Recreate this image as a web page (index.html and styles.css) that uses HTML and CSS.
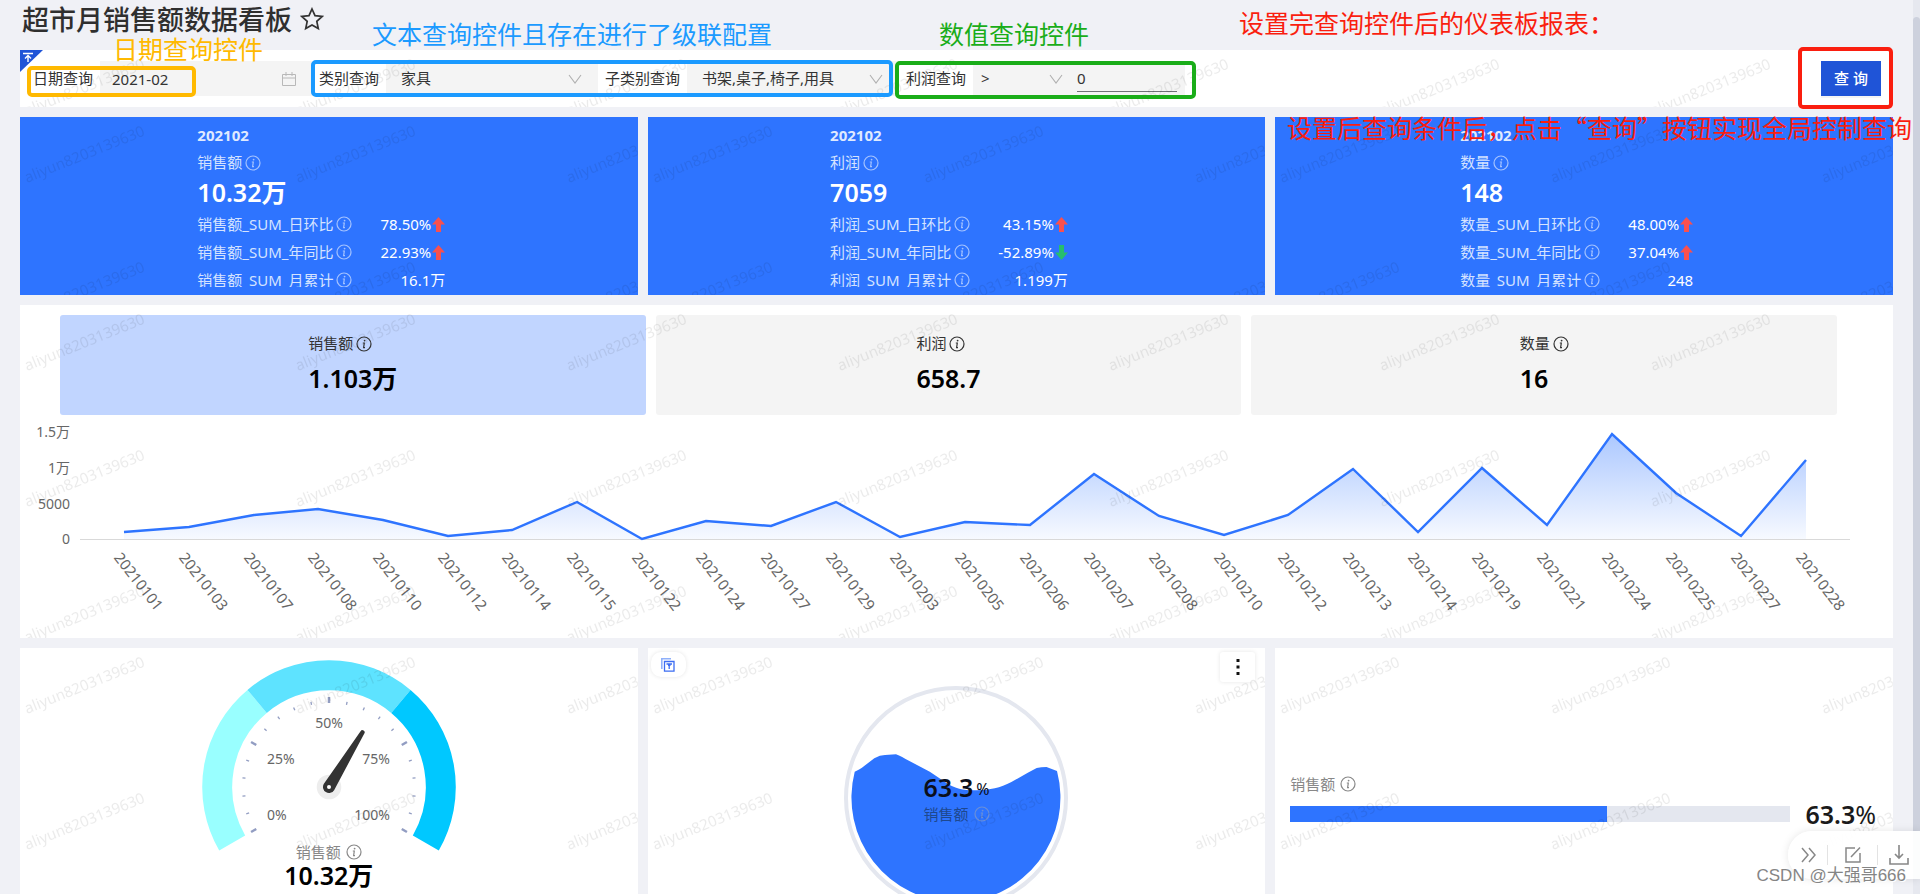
FILE: index.html
```html
<!DOCTYPE html>
<html lang="zh-CN">
<head>
<meta charset="utf-8">
<title>超市月销售额数据看板</title>
<link rel="stylesheet" href="styles.css">
</head>
<body>
<svg class="defs" aria-hidden="true">
  <defs>
    <pattern id="wm" width="271" height="136" patternUnits="userSpaceOnUse">
      <text class="wm-text" transform="translate(7 66) rotate(-22)">aliyun8203139630</text>
    </pattern>
    <linearGradient id="area" x1="0" y1="0" x2="0" y2="1">
      <stop offset="0" stop-color="#2e74ff" stop-opacity="0.4"/>
      <stop offset="1" stop-color="#2e74ff" stop-opacity="0.04"/>
    </linearGradient>
    <symbol id="info" viewBox="0 0 16 16">
      <circle cx="8" cy="8" r="7" fill="none" stroke="currentColor" stroke-width="1.2"/>
      <circle cx="8.6" cy="4.6" r="0.9" fill="currentColor"/>
      <path d="M6.8 7h1.5l-.7 4.6h1.4" fill="none" stroke="currentColor" stroke-width="1.2"/>
    </symbol>
    <symbol id="chevron" viewBox="0 0 14 10">
      <path d="M1 1l6 8 6-8" fill="none" stroke="currentColor" stroke-width="1.1"/>
    </symbol>
    <symbol id="up" viewBox="0 0 13 15">
      <path d="M6.500 0L13 7.500H9V15H4V7.500H0z" fill="#f9504e"/>
    </symbol>
    <symbol id="down" viewBox="0 0 13 15">
      <path d="M6.500 15L13 7.500H9V0H4V7.500H0z" fill="#27be6c"/>
    </symbol>
  </defs>
</svg>

<div class="page">
  <header class="top">
    <h1>超市月销售额数据看板</h1>
    <button class="star" type="button" aria-label="收藏">
      <svg width="24" height="24" viewBox="0 0 24 24"><path d="M12 2l3 6.700 7.200.800-5.400 4.900 1.500 7.200-6.300-3.700-6.300 3.700 1.500-7.200L1.800 9.500 9 8.700z" fill="none" stroke="#333" stroke-width="1.700"/></svg>
    </button>
  </header>

  <main class="board">
    <form class="panel filters">
      <svg class="corner" width="23" height="22" viewBox="0 0 23 22"><path d="M0 0h23L0 22z" fill="#1f54d7"/><path d="M3 3.500h10M8 12V6M5 8.500l3-3 3 3" fill="none" stroke="#fff" stroke-width="1.400"/></svg>
      <div class="filter">
        <label for="f-date">日期查询</label>
        <div class="control">
          <input id="f-date" type="text" value="2021-02">
          <svg class="cal" width="14" height="14" viewBox="0 0 14 14"><path d="M.5 2.500h13v11H.5zM.5 6h13M4 0v4M10 0v4" fill="none" stroke="#b8b8b8"/></svg>
        </div>
      </div>
      <div class="filter">
        <label for="f-cat">类别查询</label>
        <div class="control">
          <select id="f-cat"><option>家具</option></select>
          <svg class="chev" width="14" height="10"><use href="#chevron"/></svg>
        </div>
      </div>
      <div class="filter">
        <label for="f-sub">子类别查询</label>
        <div class="control">
          <select id="f-sub"><option>书架,桌子,椅子,用具</option></select>
          <svg class="chev" width="14" height="10"><use href="#chevron"/></svg>
        </div>
      </div>
      <div class="filter">
        <label for="f-op">利润查询</label>
        <div class="control compare">
          <div class="op">
            <select id="f-op"><option>&gt;</option></select>
            <svg class="chev" width="14" height="10"><use href="#chevron"/></svg>
          </div>
          <input type="text" value="0" aria-label="利润值">
        </div>
      </div>
      <button class="query" type="button">查 询</button>
      <svg class="wm"><rect width="100%" height="100%" fill="url(#wm)"/></svg>
    </form>

    <section class="row">
      <article class="panel kpi">
        <div class="kpi-body">
          <h2>202102</h2>
          <p class="name">销售额<svg class="info"><use href="#info"/></svg></p>
          <p class="big">10.32万</p>
          <dl>
            <dt>销售额_SUM_日环比<svg class="info"><use href="#info"/></svg></dt><dd>78.50%<svg class="arrow"><use href="#up"/></svg></dd>
            <dt>销售额_SUM_年同比<svg class="info"><use href="#info"/></svg></dt><dd>22.93%<svg class="arrow"><use href="#up"/></svg></dd>
            <dt>销售额_SUM_月累计<svg class="info"><use href="#info"/></svg></dt><dd>16.1万</dd>
          </dl>
        </div>
        <svg class="wm"><rect width="100%" height="100%" fill="url(#wm)"/></svg>
      </article>
      <article class="panel kpi">
        <div class="kpi-body">
          <h2>202102</h2>
          <p class="name">利润<svg class="info"><use href="#info"/></svg></p>
          <p class="big">7059</p>
          <dl>
            <dt>利润_SUM_日环比<svg class="info"><use href="#info"/></svg></dt><dd>43.15%<svg class="arrow"><use href="#up"/></svg></dd>
            <dt>利润_SUM_年同比<svg class="info"><use href="#info"/></svg></dt><dd>-52.89%<svg class="arrow"><use href="#down"/></svg></dd>
            <dt>利润_SUM_月累计<svg class="info"><use href="#info"/></svg></dt><dd>1.199万</dd>
          </dl>
        </div>
        <svg class="wm"><rect width="100%" height="100%" fill="url(#wm)"/></svg>
      </article>
      <article class="panel kpi">
        <div class="kpi-body">
          <h2>202102</h2>
          <p class="name">数量<svg class="info"><use href="#info"/></svg></p>
          <p class="big">148</p>
          <dl>
            <dt>数量_SUM_日环比<svg class="info"><use href="#info"/></svg></dt><dd>48.00%<svg class="arrow"><use href="#up"/></svg></dd>
            <dt>数量_SUM_年同比<svg class="info"><use href="#info"/></svg></dt><dd>37.04%<svg class="arrow"><use href="#up"/></svg></dd>
            <dt>数量_SUM_月累计<svg class="info"><use href="#info"/></svg></dt><dd>248</dd>
          </dl>
        </div>
        <svg class="wm"><rect width="100%" height="100%" fill="url(#wm)"/></svg>
      </article>
    </section>

    <section class="panel trend">
      <div class="tabs">
        <button class="tab active" type="button"><span class="tab-in"><span class="name">销售额<svg class="info"><use href="#info"/></svg></span><span class="big">1.103万</span></span></button>
        <button class="tab" type="button"><span class="tab-in"><span class="name">利润<svg class="info"><use href="#info"/></svg></span><span class="big">658.7</span></span></button>
        <button class="tab" type="button"><span class="tab-in"><span class="name">数量<svg class="info"><use href="#info"/></svg></span><span class="big">16</span></span></button>
      </div>
      <svg class="chart" viewBox="0 0 1873 223">
        <path d="M60 124.500H1830" stroke="#d9d9d9"/>
        <path fill="url(#area)" d="M104 117L169 112 234 100 298 94 363 105 428 121 492 115 557 87 622 124 686 106 751 111 816 87 880 122 945 107 1010 110 1074 59 1139 101 1204 120 1268 100 1333 54 1398 117 1462 53 1527 110 1592 19 1656 78 1721 121 1786 45V124H104z"/>
        <path fill="none" stroke="#2e74ff" stroke-width="2.400" d="M104 117L169 112 234 100 298 94 363 105 428 121 492 115 557 87 622 124 686 106 751 111 816 87 880 122 945 107 1010 110 1074 59 1139 101 1204 120 1268 100 1333 54 1398 117 1462 53 1527 110 1592 19 1656 78 1721 121 1786 45"/>
        <g class="axis-y">
          <text x="50" y="22">1.5万</text>
          <text x="50" y="58">1万</text>
          <text x="50" y="94">5000</text>
          <text x="50" y="129">0</text>
        </g>
        <g class="axis-x">
          <text transform="translate(98 139) rotate(52)">20210101</text>
          <text transform="translate(163 139) rotate(52)">20210103</text>
          <text transform="translate(228 139) rotate(52)">20210107</text>
          <text transform="translate(292 139) rotate(52)">20210108</text>
          <text transform="translate(357 139) rotate(52)">20210110</text>
          <text transform="translate(422 139) rotate(52)">20210112</text>
          <text transform="translate(486 139) rotate(52)">20210114</text>
          <text transform="translate(551 139) rotate(52)">20210115</text>
          <text transform="translate(616 139) rotate(52)">20210122</text>
          <text transform="translate(680 139) rotate(52)">20210124</text>
          <text transform="translate(745 139) rotate(52)">20210127</text>
          <text transform="translate(810 139) rotate(52)">20210129</text>
          <text transform="translate(874 139) rotate(52)">20210203</text>
          <text transform="translate(939 139) rotate(52)">20210205</text>
          <text transform="translate(1004 139) rotate(52)">20210206</text>
          <text transform="translate(1068 139) rotate(52)">20210207</text>
          <text transform="translate(1133 139) rotate(52)">20210208</text>
          <text transform="translate(1198 139) rotate(52)">20210210</text>
          <text transform="translate(1262 139) rotate(52)">20210212</text>
          <text transform="translate(1327 139) rotate(52)">20210213</text>
          <text transform="translate(1392 139) rotate(52)">20210214</text>
          <text transform="translate(1456 139) rotate(52)">20210219</text>
          <text transform="translate(1521 139) rotate(52)">20210221</text>
          <text transform="translate(1586 139) rotate(52)">20210224</text>
          <text transform="translate(1650 139) rotate(52)">20210225</text>
          <text transform="translate(1715 139) rotate(52)">20210227</text>
          <text transform="translate(1780 139) rotate(52)">20210228</text>
        </g>
      </svg>
      <svg class="wm"><rect width="100%" height="100%" fill="url(#wm)"/></svg>
    </section>

    <section class="row">
      <article class="panel widget gauge">
        <svg width="260" height="192" viewBox="-130 -127 260 192">
          <g fill="none" stroke-width="30">
            <path stroke="#99ffff" d="M-96.800 55.900A111.800 111.800 0 0 1 -71.900 -85.600"/>
            <path stroke="#5ee3ff" d="M-71.900 -85.600A111.800 111.800 0 0 1 71.900 -85.600"/>
            <path stroke="#00c8ff" d="M71.900 -85.600A111.800 111.800 0 0 1 96.800 55.900"/>
          </g>
          <g stroke="#929dc2" stroke-width="2.500">
            <path d="M0-90V-84"/>
            <path d="M0-90V-84" transform="rotate(60)"/>
            <path d="M0-90V-84" transform="rotate(120)"/>
            <path d="M0-90V-84" transform="rotate(-60)"/>
            <path d="M0-90V-84" transform="rotate(-120)"/>
          </g>
          <g stroke="#929dc2" stroke-width="1.300">
            <path d="M0-87V-84" transform="rotate(12)"/><path d="M0-87V-84" transform="rotate(24)"/><path d="M0-87V-84" transform="rotate(36)"/><path d="M0-87V-84" transform="rotate(48)"/>
            <path d="M0-87V-84" transform="rotate(72)"/><path d="M0-87V-84" transform="rotate(84)"/><path d="M0-87V-84" transform="rotate(96)"/><path d="M0-87V-84" transform="rotate(108)"/>
            <path d="M0-87V-84" transform="rotate(-12)"/><path d="M0-87V-84" transform="rotate(-24)"/><path d="M0-87V-84" transform="rotate(-36)"/><path d="M0-87V-84" transform="rotate(-48)"/>
            <path d="M0-87V-84" transform="rotate(-72)"/><path d="M0-87V-84" transform="rotate(-84)"/><path d="M0-87V-84" transform="rotate(-96)"/><path d="M0-87V-84" transform="rotate(-108)"/>
          </g>
          <circle r="12.300" fill="#ededed"/>
          <path transform="rotate(31.500)" d="M-6 0L-2.200 -64a2.200 2.200 0 0 1 4.400 0L6 0A6 6 0 0 1 -6 0z" fill="#333"/>
          <circle r="2" fill="#fff"/>
          <g class="gauge-text">
            <text x="-62" y="33">0%</text>
            <text x="-62" y="-23">25%</text>
            <text x="0" y="-59" text-anchor="middle">50%</text>
            <text x="61" y="-23" text-anchor="end">75%</text>
            <text x="61" y="33" text-anchor="end">100%</text>
          </g>
        </svg>
        <p class="name">销售额<svg class="info"><use href="#info"/></svg></p>
        <p class="big">10.32万</p>
        <svg class="wm"><rect width="100%" height="100%" fill="url(#wm)"/></svg>
      </article>

      <article class="panel widget liquid">
        <svg class="ball" width="224" height="224" viewBox="-112 -112 224 224">
          <circle r="110" fill="#fff" stroke="#e4e7ef" stroke-width="4"/>
          <path fill="#2e74ff" d="M-101.300 -26.300C-98 -28 -95 -29 -91.500 -32.300L-81.700 -39.700Q-76 -43 -71 -43L-60 -43.700C-56 -42 -52 -40 -46.600 -37L-26.200 -26.300-8 -14C2 -8 12 -7.700 21 -7.700 34 -8 44 -10 55.400 -16L71.800 -25.300 80.700 -30Q85 -31 90.500 -31L101 -27A104.500 104.500 0 1 1 -101.300 -26.300z"/>
        </svg>
        <div class="ball-text">
          <p class="big">63.3<small>%</small></p>
          <p class="name">销售额<svg class="info"><use href="#info"/></svg></p>
        </div>
        <button class="badge" type="button" aria-label="联动">
          <svg width="14" height="14" viewBox="0 0 14 14"><path d="M.8 11V.8H10" fill="none" stroke="#8fb0fa" stroke-width="1.600"/><path d="M3.500 3.500h9.500v9.700H3.500zM5.500 6h5.500M8.200 6v5M7 7.300h2.500" fill="none" stroke="#3d6df2" stroke-width="1.300"/></svg>
        </button>
        <button class="more" type="button" aria-label="更多">
          <svg width="4" height="16" viewBox="0 0 4 16"><path d="M.5 0h3v3h-3zM.5 6.500h3v3h-3zM.5 13h3v3h-3z" fill="#111"/></svg>
        </button>
        <svg class="wm"><rect width="100%" height="100%" fill="url(#wm)"/></svg>
      </article>

      <article class="panel widget progress">
        <p class="name">销售额<svg class="info"><use href="#info"/></svg></p>
        <div class="bar-row">
          <div class="bar"><div class="fill" style="width:63.3%"></div></div>
          <p class="big">63.3<span>%</span></p>
        </div>
        <svg class="wm"><rect width="100%" height="100%" fill="url(#wm)"/></svg>
      </article>
    </section>
  </main>

  <div class="scroll"><div class="thumb"></div></div>

  <nav class="tools">
    <button type="button" aria-label="收起"><svg width="18" height="18" viewBox="0 0 18 18"><path d="M2 2l6 7-6 7M9 2l6 7-6 7" fill="none" stroke="#888" stroke-width="1.500"/></svg></button>
    <button type="button" aria-label="编辑"><svg width="18" height="18" viewBox="0 0 18 18"><path d="M11 2H2v14h14V7M7 11l9-9.500" fill="none" stroke="#888" stroke-width="1.500"/></svg></button>
    <button type="button" aria-label="下载"><svg width="20" height="20" viewBox="0 0 20 20"><path d="M1 13v6h18v-6M10 0v13M6 9l4 4 4-4" fill="none" stroke="#888" stroke-width="1.600"/></svg></button>
  </nav>

  <div class="notes">
    <div class="box box-date"></div>
    <div class="box box-text"></div>
    <div class="box box-num"></div>
    <div class="box box-query"></div>
    <p class="note note-date">日期查询控件</p>
    <p class="note note-text">文本查询控件且存在进行了级联配置</p>
    <p class="note note-num">数值查询控件</p>
    <p class="note note-title">设置完查询控件后的仪表板报表：</p>
    <p class="note note-query">设置后查询条件后，点击“查询”按钮实现全局控制查询</p>
    <p class="credit">CSDN @大强哥666</p>
  </div>
</div>
</body>
</html>
```
FILE: styles.css
```css
* { box-sizing: border-box; }
body, h1, h2, p, dl, dd { margin: 0; }
body {
  font: 15px/27px "Noto Sans", "Noto Sans CJK SC", sans-serif;
  color: #333;
  background: #f0f1f6;
}
button, input, select { font: inherit; color: inherit; border: 0; padding: 0; background: none; }
.defs { position: absolute; width: 0; height: 0; }

.page { position: relative; height: 100vh; overflow: hidden; }
.top { display: flex; align-items: center; gap: 8px; height: 50px; padding: 0 22px 12px; }
h1 { font-size: 27px; line-height: 38px; font-weight: 500; font-family: "Noto Sans CJK SC", sans-serif; color: #2f2f2f; }
.star { display: flex; }

.board { display: flex; flex-direction: column; gap: 10px; margin: 0 27px 0 20px; }
.panel { position: relative; background: #fff; }
.wm { position: absolute; inset: 0; width: 100%; height: 100%; pointer-events: none; }
.wm-text { font-size: 15px; fill: #000; fill-opacity: 0.08; }
.row { display: grid; grid-template-columns: repeat(3, 1fr); gap: 10px; }
.big { font-size: 25px; line-height: 32px; font-weight: 600; }
.name { display: flex; align-items: center; }
.info { flex: none; width: 16px; height: 16px; margin-left: 3px; }

.filters { display: flex; align-items: center; gap: 7px; padding: 11px 12px 11px 13px; }
.corner { position: absolute; left: 0; top: 0; }
.filter { display: flex; align-items: center; gap: 7px; white-space: nowrap; }
.control { position: relative; display: flex; align-items: center; width: 212px; height: 35px; background: #f4f4f4; }
.control input, .control select { width: 100%; height: 100%; padding: 0 15px; appearance: none; outline: 0; }
.control #f-date { padding-left: 12px; }
.control .cal, .control .chev { position: absolute; right: 16px; color: #b0b0b0; pointer-events: none; }
.compare { gap: 12px; padding-right: 8px; }
.compare .op { position: relative; display: flex; align-items: center; width: 92px; height: 100%; }
.compare .op select { padding: 0 8px; }
.compare .op .chev { right: 2px; }
.compare input { flex: 1; width: 0; height: 27px; padding: 0; border-bottom: 1px solid #707278; }
.query { margin-left: auto; width: 60px; height: 35px; color: #fff; background: #1f54d7; font-weight: 500; box-shadow: 0 2px 0 #0000000b; }

.kpi { display: flex; justify-content: center; height: 178px; padding: 5px 15px 8px 0; background: #2e74ff; color: #fff; }
.kpi-body { overflow: hidden; }
.kpi h2 { font-size: 15px; font-weight: 700; opacity: 0.85; }
.kpi .name, .kpi dt { color: #d5e3ff; }
.kpi .info { color: #a5c3ff; }
.kpi dl { display: grid; grid-template-columns: auto auto; column-gap: 28px; grid-auto-rows: 28px; line-height: 28px; margin-top: 2px; }
.kpi dt, .kpi dd { display: flex; align-items: center; }
.kpi dd { justify-content: flex-end; }
.arrow { width: 13px; height: 15px; margin-left: 1px; }

.trend { padding-top: 10px; }
.tabs { display: grid; grid-template-columns: repeat(3, 1fr); gap: 10px; margin: 0 56px 0 40px; }
.tab { display: flex; justify-content: center; height: 100px; padding-top: 15px; border-radius: 3px; background: #f4f4f4; }
.tab.active { background: #c1d5ff; }
.tab-in { display: flex; flex-direction: column; align-items: flex-start; gap: 5px; }
.tab .big { color: #000; }
.chart { display: block; width: 100%; height: auto; }
.axis-y { font-size: 14px; text-anchor: end; fill: #666; }
.axis-x { font-size: 15px; dominant-baseline: central; fill: #666; }

.widget { height: 300px; }
.gauge { display: flex; flex-direction: column; align-items: center; padding-top: 12px; }
.gauge-text { font-size: 14px; fill: #666; }
.gauge .name, .progress .name { color: #888; line-height: 20px; }
.widget .info { margin-left: 5px; }
.gauge .name { margin-top: -10px; }
.gauge .big { line-height: 26px; color: #000; }

.liquid { display: flex; align-items: center; justify-content: center; }
.ball-text { position: absolute; left: 0; right: 0; top: 124px; display: flex; flex-direction: column; align-items: center; }
.ball-text .big { color: #0b0f1a; line-height: 30px; }
.ball-text small { margin-left: 3px; font-size: 16px; font-weight: 400; vertical-align: 2px; }
.ball-text .name { line-height: 20px; color: #1e488f; }
.ball-text .info { color: #6b8fd8; }
.badge, .more { position: absolute; top: 4px; display: flex; align-items: center; justify-content: center; width: 35px; background: #fff; box-shadow: 0 0 4px #0000001a; }
.badge { left: 3px; height: 25px; border-radius: 10px; }
.more { right: 10px; height: 30px; border-radius: 3px; }

.progress { display: flex; flex-direction: column; justify-content: center; gap: 4px; padding: 8px 17px 0 15px; }
.bar-row { display: flex; align-items: center; gap: 15px; }
.bar { flex: 1; height: 16px; background: #e4e7ef; }
.fill { height: 100%; background: #2e74ff; }
.progress .big { color: #1a1a1a; }
.progress .big span { font-weight: 400; }

.scroll { position: absolute; top: 0; right: 0; bottom: 0; width: 7px; background: #e6e8ef; }
.thumb { height: 862px; margin-top: 17px; border-radius: 4px 4px 0 0; background: #cdd1dd; }
.tools { position: absolute; right: 0; bottom: 15px; display: flex; align-items: center; height: 48px; padding-left: 3px; border-radius: 24px 0 0 24px; background: #fffffff0; box-shadow: 0 0 8px #0000001a; }
.tools button { display: flex; align-items: center; justify-content: center; width: 50px; height: 20px; }
.tools button:first-child { width: 36px; }
.tools button + button { border-left: 1px solid #e3e3e3; }
.tools button:last-child { width: 43px; }

.notes { position: absolute; inset: 0; pointer-events: none; }
.box { position: absolute; border: 4px solid; border-radius: 5px; }
.box-date { left: 27px; top: 66px; width: 169px; height: 31px; color: #ffb900; }
.box-text { left: 311px; top: 60px; width: 582px; height: 37px; color: #1b9aff; }
.box-num { left: 895px; top: 61px; width: 301px; height: 38px; color: #1aad19; }
.box-query { right: 27px; top: 47px; width: 95px; height: 62px; color: #fa1e0f; }
.note { position: absolute; font: 400 25px/30px "Noto Sans CJK SC", sans-serif; white-space: nowrap; }
.note-date { left: 113px; top: 33px; color: #ffb900; }
.note-text { left: 372px; top: 18px; color: #1b9aff; }
.note-num { left: 939px; top: 18px; color: #1aad19; }
.note-title { left: 1239px; top: 7px; color: #fa1e0f; }
.note-query { right: 8px; top: 112px; color: #fa1e0f; }
.credit { position: absolute; right: 14px; bottom: 6px; font: 17px/24px "Liberation Sans", "Noto Sans CJK SC", sans-serif; color: #858585; text-shadow: 1px 1px 0 #fff; }
```
